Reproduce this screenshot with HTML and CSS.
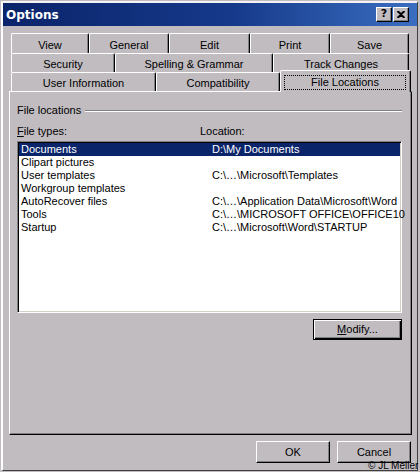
FILE: index.html
```html
<!DOCTYPE html>
<html>
<head>
<meta charset="utf-8">
<title>Options</title>
<link rel="stylesheet" href="styles.css">
</head>
<body>
<div class="window">
  <div class="frame">
    <div class="titlebar">
      <span class="title">Options</span>
      <div class="tbtns">
        <span class="tbtn q">?</span>
        <span class="tbtn x"><svg width="8" height="7" viewBox="0 0 8 7"><path d="M0.5 0 L4 3.2 L7.5 0 M0.5 7 L4 3.8 L7.5 7" stroke="#000" stroke-width="2" fill="none"/></svg></span>
      </div>
    </div>
    <div class="body">
      <div class="tabs">
        <div class="tabrow r1">
          <div class="tab w78">View</div>
          <div class="tab w80">General</div>
          <div class="tab w81">Edit</div>
          <div class="tab w80">Print</div>
          <div class="tab w79">Save</div>
        </div>
        <div class="tabrow r2">
          <div class="tab w104">Security</div>
          <div class="tab w158">Spelling &amp; Grammar</div>
          <div class="tab w136">Track Changes</div>
        </div>
        <div class="tabrow r3">
          <div class="tab w145">User Information</div>
          <div class="tab w124">Compatibility</div>
          <div class="tab sel w131"><div class="focus">File Locations</div></div>
        </div>
      </div>
      <div class="panel">
        <div class="ghead"><span>File locations</span><span class="gline"></span></div>
        <div class="labels"><span class="lab1"><u>F</u>ile types:</span><span>Location:</span></div>
        <div class="list">
          <div class="row selected"><span class="c1">Documents</span><span>D:\My Documents</span></div>
          <div class="row"><span class="c1">Clipart pictures</span><span></span></div>
          <div class="row"><span class="c1">User templates</span><span>C:\…\Microsoft\Templates</span></div>
          <div class="row"><span class="c1">Workgroup templates</span><span></span></div>
          <div class="row"><span class="c1">AutoRecover files</span><span>C:\…\Application Data\Microsoft\Word</span></div>
          <div class="row"><span class="c1">Tools</span><span>C:\…\MICROSOFT OFFICE\OFFICE10</span></div>
          <div class="row"><span class="c1">Startup</span><span>C:\…\Microsoft\Word\STARTUP</span></div>
        </div>
        <div class="mrow"><div class="btn def"><span><u>M</u>odify...</span></div></div>
      </div>
      <div class="btnrow">
        <div class="btn">OK</div>
        <div class="btn">Cancel</div>
      </div>
    </div>
  </div>
  <div class="copy">© JL Meller</div>
</div>
</body>
</html>
```
FILE: styles.css
```css
* { box-sizing: border-box; }
html, body { margin: 0; padding: 0; }
body {
  width: 420px;
  height: 472px;
  overflow: hidden;
  background: #c0bcc0;
  font-family: "Liberation Sans", Arial, sans-serif;
  font-size: 11px;
  line-height: 13px;
  color: #000;
}
.window {
  position: relative;
  width: 420px;
  height: 472px;
  padding: 1px 2px 1px 1px;
  background: #c0bcc0;
  overflow: hidden;
}
.frame {
  height: 470px;
  border-left: 2px solid #fff;
  border-top: 2px solid #f4f2f4;
  border-right: 1px solid #404040;
  border-bottom: 1px solid #404040;
  display: flex;
  flex-direction: column;
}
.titlebar {
  height: 23px;
  flex: none;
  display: flex;
  align-items: center;
  justify-content: space-between;
  padding: 0 8px 0 3px;
  background: linear-gradient(to right, #0a246a 0%, #16398a 55%, #3a6ec0 100%);
}
.title {
  color: #fff;
  font-family: "DejaVu Sans", Verdana, sans-serif;
  font-weight: bold;
  font-size: 12px;
  line-height: 14px;
}
.tbtns { display: flex; gap: 1px; }
.tbtn {
  width: 16px;
  height: 15px;
  background: #c0bcc0;
  border: 1px solid;
  border-color: #fff #000 #000 #fff;
  box-shadow: inset -1px -1px #808080;
  display: flex;
  align-items: center;
  justify-content: center;
}
.q {
  font-family: "DejaVu Sans", Verdana, sans-serif;
  font-weight: bold;
  font-size: 11px;
  line-height: 12px;
  padding-bottom: 1px;
}
.x svg { display: block; }
.body {
  flex: 1;
  display: flex;
  flex-direction: column;
  padding: 7px 5px 0 6px;
}
.tabs { padding-left: 2px; }
.tabrow { display: flex; align-items: flex-start; }
.r1 { height: 20px; }
.r2, .r3 { height: 19px; }
.tab {
  height: 100%;
  flex: none;
  border-top: 1px solid #fff;
  border-left: 1px solid #fff;
  border-right: 1px solid #000;
  box-shadow: inset -1px 0 #808080;
  border-radius: 2px 2px 0 0;
  text-align: center;
  padding-top: 4px;
  white-space: nowrap;
}
.r1 .tab { padding-top: 5px; }
.tab.sel {
  position: relative;
  z-index: 2;
  height: 22px;
  margin-top: -2px;
  background: #c0bcc0;
  padding: 4px 4px 0 3px;
}
.focus {
  height: 15px;
  border: 1px dotted #000;
  line-height: 13px;
  text-align: center;
}
.w78 { width: 78px; }
.w79 { width: 79px; }
.w80 { width: 80px; }
.w81 { width: 81px; }
.w104 { width: 104px; }
.w158 { width: 158px; }
.w136 { width: 136px; }
.w145 { width: 145px; }
.w124 { width: 124px; }
.w131 { width: 131px; }
.panel {
  height: 344px;
  flex: none;
  border-top: 1px solid #fff;
  border-left: 1px solid #fff;
  border-right: 1px solid #000;
  border-bottom: 1px solid #000;
  box-shadow: inset -1px -1px #808080;
  padding: 12px 9px 0 7px;
}
.ghead {
  display: flex;
  align-items: center;
  height: 13px;
}
.gline {
  flex: 1;
  height: 2px;
  margin-left: 4px;
  border-top: 1px solid #808080;
  border-bottom: 1px solid #fff;
}
.labels {
  display: flex;
  margin-top: 8px;
  height: 13px;
}
.lab1 { width: 183px; }
.list {
  margin-top: 3px;
  height: 172px;
  background: #fff;
  border: 1px solid;
  border-color: #808080 #fff #fff #808080;
  box-shadow: inset 1px 1px #000, inset -1px -1px #d4d0c8;
  padding: 1px;
}
.row {
  display: flex;
  height: 13px;
  padding-left: 2px;
  white-space: nowrap;
}
.c1 { width: 191px; flex: none; }
.row.selected { background: #0a246a; color: #fff; }
.mrow {
  display: flex;
  justify-content: flex-end;
  margin-top: 6px;
}
.btn {
  width: 74px;
  height: 22px;
  background: #c0bcc0;
  border: 1px solid;
  border-color: #fff #000 #000 #fff;
  box-shadow: inset -1px -1px #808080;
  display: flex;
  align-items: center;
  justify-content: center;
}
.btn.def {
  width: 89px;
  height: 21px;
  border-color: #000;
  box-shadow: inset 1px 1px #fff, inset -1px -1px #000, inset -2px -2px #808080;
}
.btnrow {
  display: flex;
  justify-content: flex-end;
  gap: 7px;
  margin-top: 6px;
  padding-right: 1px;
}
.copy {
  position: absolute;
  left: 368px;
  top: 460px;
  white-space: nowrap;
  font-size: 10px;
  line-height: 12px;
  color: #000;
}
```
